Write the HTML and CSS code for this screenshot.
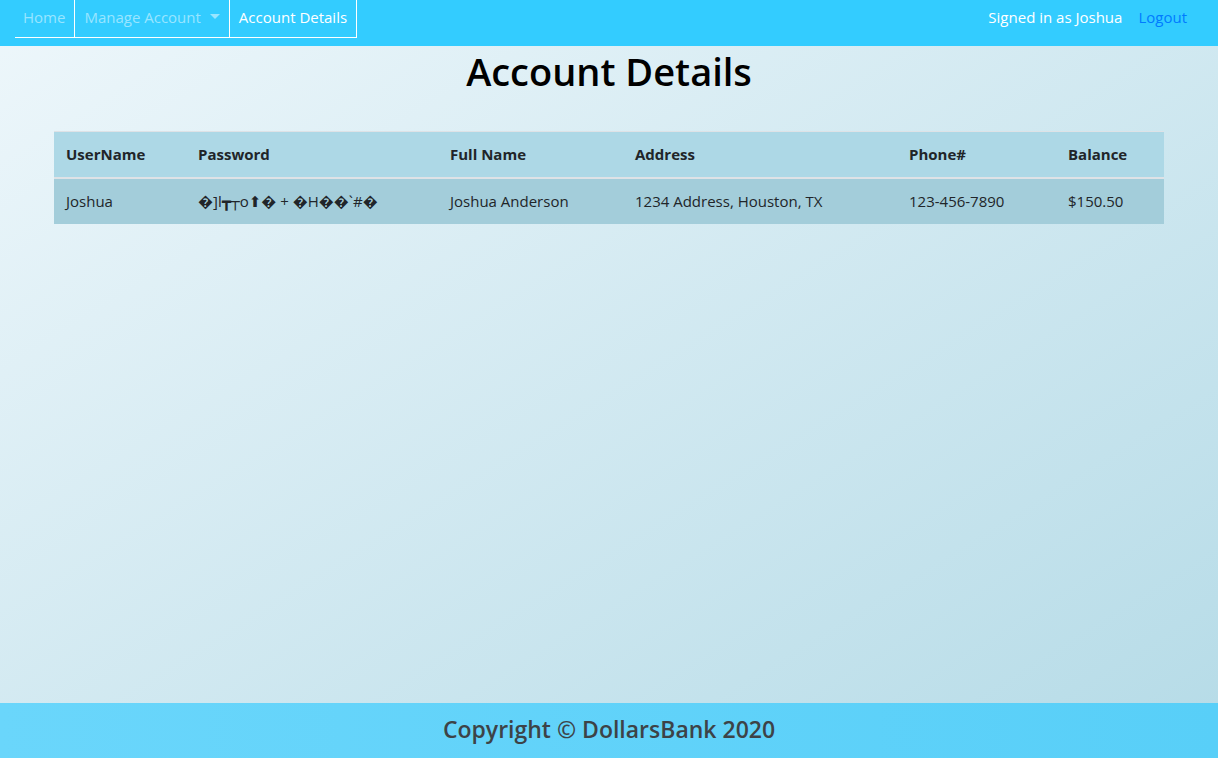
FILE: index.html
```html
<!DOCTYPE html>
<html lang="en">
<head>
<meta charset="utf-8">
<title>Account Details</title>
<link rel="stylesheet" href="styles.css">
</head>
<body>
<nav class="navbar">
  <ul class="tabs">
    <li class="tab"><a class="tab-link first" href="#">Home</a></li>
    <li class="tab"><a class="tab-link" href="#">Manage Account<span class="caret"></span></a></li>
    <li class="tab"><a class="tab-link active" href="#">Account Details</a></li>
  </ul>
  <div class="user">
    <span class="signed">Signed in as Joshua</span>
    <a class="logout" href="#">Logout</a>
  </div>
</nav>
<main class="main">
  <h1 class="title">Account Details</h1>
  <div class="container">
    <table class="table">
      <thead>
        <tr>
          <th class="c1">UserName</th>
          <th class="c2">Password</th>
          <th class="c3">Full Name</th>
          <th class="c4">Address</th>
          <th class="c5">Phone#</th>
          <th class="c6">Balance</th>
        </tr>
      </thead>
      <tbody>
        <tr>
          <td>Joshua</td>
          <td class="pw">�]l┳┬o⬆� + �H��`#�</td>
          <td>Joshua Anderson</td>
          <td>1234 Address, Houston, TX</td>
          <td>123-456-7890</td>
          <td>$150.50</td>
        </tr>
      </tbody>
    </table>
  </div>
</main>
<footer class="footer">Copyright © DollarsBank 2020</footer>
</body>
</html>
```
FILE: styles.css
```css
html, body {
  margin: 0;
  padding: 0;
}
body {
  font-family: "Open Sans", "Noto Sans", "DejaVu Sans", sans-serif;
  font-size: 15px;
  color: #212529;
  min-height: 758px;
  display: flex;
  flex-direction: column;
  background: linear-gradient(to bottom right, #eef7fb, #b5dbe7);
}
.navbar {
  height: 46px;
  background: #33ccff;
  display: flex;
  justify-content: space-between;
  align-items: flex-start;
  padding: 0 23px 0 15px;
  box-sizing: border-box;
}
.tabs {
  list-style: none;
  margin: 0;
  padding: 0;
  display: flex;
  border-bottom: 1px solid #ffffff;
  height: 37px;
}
.tab {
  border-right: 1px solid #ffffff;
}
.tab-link {
  display: flex;
  align-items: center;
  height: 34px;
  padding: 0 9px 3px;
  color: #99e5ff;
  text-decoration: none;
}
.tab-link.first {
  padding-left: 8px;
}
.tab-link.active {
  color: #ffffff;
}
.caret {
  display: inline-block;
  margin-left: 9px;
  margin-top: -2px;
  border-top: 5px solid #99e5ff;
  border-left: 5px solid transparent;
  border-right: 5px solid transparent;
}
.user {
  display: flex;
  align-items: center;
  height: 34px;
  padding-bottom: 3px;
}
.signed {
  color: #ffffff;
}
.logout {
  color: #007bff;
  text-decoration: none;
  padding: 0 8px;
  margin-left: 8px;
}
.main {
  flex: 1;
}
.title {
  margin: 1px 0 0;
  text-align: center;
  font-size: 38px;
  font-weight: 600;
  line-height: 48px;
  color: #000;
}
.container {
  width: 1110px;
  margin: 36px auto 0;
}
.table {
  width: 100%;
  border-collapse: collapse;
  table-layout: fixed;
}
.table th, .table td {
  text-align: left;
  padding: 12px;
  line-height: 21px;
  border-top: 1px solid #dee2e6;
  white-space: nowrap;
}
.table th {
  font-weight: 700;
  background: #add8e6;
  border-bottom: 2px solid #dee2e6;
}
.table td {
  background: #a3cdda;
  border-top: 0;
}
.c1 { width: 108px; }
.c2 { width: 228px; }
.c3 { width: 161px; }
.c4 { width: 250px; }
.c5 { width: 135px; }
.c6 { width: 84px; }
.footer {
  height: 55px;
  display: flex;
  align-items: center;
  justify-content: center;
  padding-bottom: 3px;
  box-sizing: border-box;
  background: linear-gradient(to right, #6ad6fb, #58cff8);
  color: #3d4347;
  font-size: 23px;
  font-weight: 600;
}
```
